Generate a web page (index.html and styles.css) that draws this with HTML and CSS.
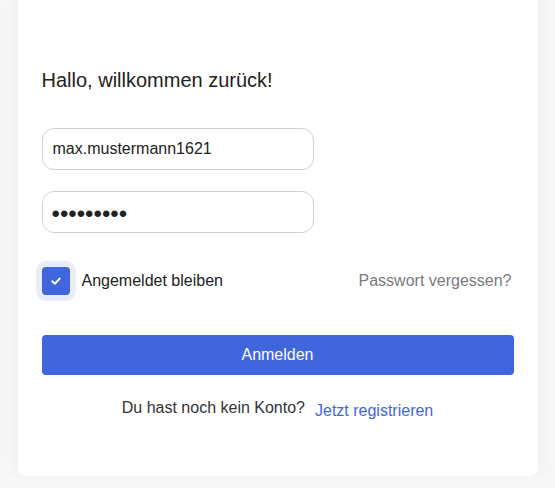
FILE: index.html
```html
<!DOCTYPE html>
<html lang="de">
<head>
    <meta charset="UTF-8">
    <meta name="viewport" content="width=device-width, initial-scale=1.0">
    <title>Anmelden</title>
    <link rel="stylesheet" href="styles.css">
</head>
<body>
    <div class="login-card">
        <h1>Hallo, willkommen zurück!</h1>

        <form class="login-form">
            <input type="text" class="field" value="max.mustermann1621">
            <input type="password" class="field" value="geheim123">

            <div class="options">
                <label class="remember">
                    <span class="checkbox">
                        <svg width="12" height="12" viewBox="0 0 12 12">
                            <path d="M2.3 6.3 L4.9 8.7 L9.7 3.6" fill="none" stroke="#fff" stroke-width="2" stroke-linecap="round" stroke-linejoin="round"/>
                        </svg>
                    </span>
                    Angemeldet bleiben
                </label>
                <a href="#" class="forgot">Passwort vergessen?</a>
            </div>

            <button type="submit">Anmelden</button>
        </form>

        <div class="signup">
            <span>Du hast noch kein Konto?</span>
            <a href="#" class="signup-link">Jetzt registrieren</a>
        </div>
    </div>
</body>
</html>
```

FILE: styles.css
```css
body {
    margin: 0;
    background-color: #f7f7f7;
    font-family: "Liberation Sans", Arial, sans-serif;
    color: #222;
}
.login-card {
    max-width: 520px;
    margin: -12px auto 0;
    padding: 80px 24px 58px;
    box-sizing: border-box;
    background: #fff;
    border-radius: 8px;
    box-shadow: 0 0 24px rgba(0, 0, 0, 0.05);
}
h1 {
    margin: 0 0 36px;
    font-size: 20px;
    font-weight: normal;
    line-height: 24px;
    color: #222;
}
.login-form {
    display: flex;
    flex-direction: column;
}
.field {
    width: 272px;
    height: 42px;
    margin-bottom: 21px;
    padding: 0 10px;
    box-sizing: border-box;
    border: 1px solid #d2d2d6;
    border-radius: 12px;
    font-family: inherit;
    font-size: 16px;
    color: #222;
    outline: none;
}
.field[type="password"] {
    font-size: 24px;
    letter-spacing: 0;
    padding-left: 9px;
    padding-top: 3px;
}
.options {
    display: flex;
    justify-content: space-between;
    align-items: center;
    margin-top: 13px;
    margin-bottom: 40px;
}
.remember {
    display: flex;
    align-items: center;
    gap: 12px;
    font-size: 16px;
    color: #222;
}
.checkbox {
    display: flex;
    align-items: center;
    justify-content: center;
    width: 28px;
    height: 28px;
    background-color: #4066de;
    border-radius: 4px;
    box-shadow: 0 0 0 6px #e9edfb;
}
.forgot {
    font-size: 16px;
    color: #7a7a80;
    text-decoration: none;
    margin-right: 2px;
}
button {
    height: 40px;
    background-color: #4066de;
    color: #fff;
    border: none;
    border-radius: 4px;
    font-family: inherit;
    font-size: 16px;
    cursor: pointer;
}
.signup {
    display: flex;
    justify-content: center;
    align-items: baseline;
    gap: 10px;
    margin-top: 23px;
    font-size: 16px;
    line-height: 20px;
    color: #333;
}
.signup-link {
    color: #4066de;
    text-decoration: none;
    position: relative;
    top: 3px;
}
```
